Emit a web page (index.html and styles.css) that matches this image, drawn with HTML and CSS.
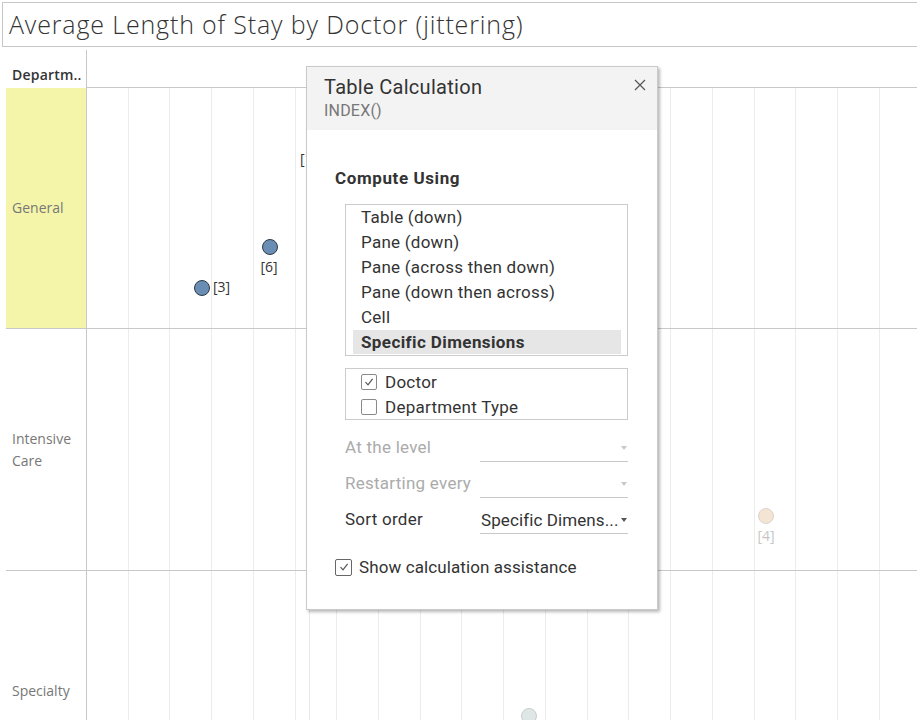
FILE: index.html
```html
<!DOCTYPE html>
<html>
<head>
<meta charset="utf-8">
<link rel="stylesheet" href="styles.css">
</head>
<body>
<div class="title">Average Length of Stay by Doctor (jittering)</div>
<div class="viz">
  <div class="hdr-label">Departm..</div>
  <div class="hdr-pane"></div>

  <div class="row-label sel"><span>General</span></div>
  <div class="pane">
    <div class="dot blue" style="left:107px;top:192px"></div>
    <div class="lbl" style="left:126px;top:190px">[3]</div>
    <div class="dot blue" style="left:175px;top:151px"></div>
    <div class="lbl center" style="left:182px;top:170px">[6]</div>
    <div class="lbl" style="left:213px;top:62px">[1]</div>
  </div>

  <div class="row-label"><span>Intensive<br>Care</span></div>
  <div class="pane">
    <div class="dot faded" style="left:671px;top:179px"></div>
    <div class="lbl center faint" style="left:679px;top:198px">[4]</div>
  </div>

  <div class="row-label low"><span>Specialty</span></div>
  <div class="pane last">
    <div class="dot teal" style="left:434px;top:137px"></div>
  </div>
</div>

<div class="dialog">
  <div class="dlg-head">
    <div class="dlg-title">Table Calculation</div>
    <div class="dlg-sub">INDEX()</div>
    <svg class="close" width="12" height="12" viewBox="0 0 12 12"><path d="M1 1L11 11M11 1L1 11" stroke="#555" stroke-width="1.2" fill="none"/></svg>
  </div>
  <div class="dlg-body">
    <div class="section">Compute Using</div>
    <div class="listbox">
      <div class="item">Table (down)</div>
      <div class="item">Pane (down)</div>
      <div class="item">Pane (across then down)</div>
      <div class="item">Pane (down then across)</div>
      <div class="item">Cell</div>
      <div class="item selected">Specific Dimensions</div>
    </div>
    <div class="checkbox-box">
      <div class="check-row"><span class="cb on"><svg width="10" height="10" viewBox="0 0 10 10"><path d="M1.5 5.2L4 7.8L8.6 1.8" stroke="#555" stroke-width="1.2" fill="none"/></svg></span>Doctor</div>
      <div class="check-row"><span class="cb"></span>Department Type</div>
    </div>
    <div class="field disabled">
      <div class="field-label">At the level</div>
      <div class="select"><span class="val"></span><span class="arrow"></span></div>
    </div>
    <div class="field disabled">
      <div class="field-label">Restarting every</div>
      <div class="select"><span class="val"></span><span class="arrow"></span></div>
    </div>
    <div class="field">
      <div class="field-label">Sort order</div>
      <div class="select"><span class="val">Specific Dimens...</span><span class="arrow"></span></div>
    </div>
    <div class="assist"><span class="cb big on"><svg width="10" height="10" viewBox="0 0 10 10"><path d="M1.5 5.2L4 7.8L8.6 1.8" stroke="#555" stroke-width="1.2" fill="none"/></svg></span>Show calculation assistance</div>
  </div>
</div>
</body>
</html>
```
FILE: styles.css
```css
html, body {
  margin: 0;
  padding: 0;
  background: #fff;
}
body {
  width: 917px;
  height: 720px;
  overflow: hidden;
  position: relative;
  font-family: "Open Sans", sans-serif;
}
.title {
  margin: 2px 0 0 2px;
  height: 43px;
  border: 1px solid #c6c6c6;
  border-right: none;
  padding-left: 6px;
  font-family: "Open Sans", sans-serif;
  font-size: 25px;
  font-weight: 300;
  line-height: 43px;
  color: #333;
  white-space: nowrap;
  letter-spacing: 0.85px;
}
.viz {
  margin-left: 6px;
  display: grid;
  grid-template-columns: 80px 831px;
  grid-template-rows: 40px 241px 242px 150px;
}
.hdr-label {
  font-size: 14px;
  font-weight: 600;
  color: #333;
  padding: 19px 0 0 6px;
  line-height: 18px;
  white-space: nowrap;
  letter-spacing: 0.2px;
}
.hdr-pane {
  margin-top: 3px;
  border-left: 1px solid #c8c8c8;
}
.row-label {
  border-top: 1px solid #c8c8c8;
  display: flex;
  align-items: center;
  padding-left: 6px;
  font-size: 14px;
  line-height: 22px;
  color: #777;
}
.row-label.sel {
  background: #f5f5aa;
  border-top-color: #fff;
}
.row-label.low {
  align-items: flex-start;
  padding-top: 109px;
  box-sizing: border-box;
}
.pane {
  position: relative;
  border-top: 1px solid #c8c8c8;
  border-left: 1px solid #c8c8c8;
  background-image:
    linear-gradient(90deg, transparent 222px, #e8e8e8 222px, #e8e8e8 223px, transparent 223px),
    repeating-linear-gradient(90deg, transparent 0, transparent 40.72px, #ececec 40.72px, #ececec 41.72px);
}
.dot {
  position: absolute;
  width: 14px;
  height: 14px;
  border-radius: 50%;
  border: 1px solid #333;
}
.dot.blue { background: #6a8db4; border-color: #2f3a46; }
.dot.faded { background: #f3e4d3; border-color: #dcd4cc; }
.dot.teal { background: #dfe7e6; border-color: #c8cfcf; }
.lbl {
  position: absolute;
  font-size: 14px;
  line-height: 18px;
  color: #333;
  white-space: nowrap;
}
.lbl.center { transform: translateX(-50%); }
.lbl.faint { color: #c6c6c6; }

.dialog {
  position: absolute;
  left: 306px;
  top: 66px;
  width: 350px;
  height: 542px;
  border: 1px solid #c9c9c9;
  background: #fff;
  box-shadow: 2px 2px 3px rgba(0,0,0,0.28);
  font-family: Roboto, "Liberation Sans", sans-serif;
  color: #333;
}
.dlg-head {
  position: relative;
  height: 55px;
  padding: 8px 0 0 17px;
  background: #f3f3f3;
}
.dlg-title {
  font-size: 20px;
  line-height: 24px;
  color: #333;
  letter-spacing: 0.3px;
}
.dlg-sub {
  margin-top: 2px;
  font-size: 16px;
  line-height: 20px;
  color: #777;
  letter-spacing: 0.2px;
}
.close {
  position: absolute;
  right: 11px;
  top: 12px;
}
.dlg-body {
  padding: 38px 29px 0 28px;
  letter-spacing: 0.25px;
}
.section {
  font-size: 17px;
  font-weight: 700;
  line-height: 20px;
  letter-spacing: 0.6px;
}
.listbox {
  margin: 16px 0 0 10px;
  border: 1px solid #ccc;
  padding: 0 6px 0 7px;
}
.item {
  height: 25px;
  line-height: 25px;
  padding-left: 8px;
  font-size: 17px;
  white-space: nowrap;
}
.item.selected {
  background: #e6e6e6;
  font-weight: 700;
  height: 24px;
  margin-bottom: 1px;
  letter-spacing: 0.4px;
}
.checkbox-box {
  margin: 12px 0 0 10px;
  border: 1px solid #ccc;
  padding-left: 15px;
}
.check-row {
  height: 25px;
  display: flex;
  align-items: center;
  font-size: 17px;
  line-height: 24px;
}
.cb {
  border: 1px solid #8a8a8a;
  border-radius: 2px;
  margin-right: 8px;
  display: flex;
  align-items: center;
  justify-content: center;
  box-sizing: border-box;
  width: 16px;
  height: 16px;
  flex: none;
}
.cb.big {
  width: 17px;
  height: 17px;
  margin-right: 7px;
  border-color: #666;
}
.field {
  display: flex;
  height: 28px;
  margin: 8px 0 0 10px;
  font-size: 17px;
}
.checkbox-box + .field { margin-top: 14px; }
.field-label {
  width: 135px;
  line-height: 27px;
  white-space: nowrap;
}
.field.disabled { color: #ababab; }
.select {
  flex: 1;
  display: flex;
  align-items: center;
  border-bottom: 1px solid #c8c8c8;
  padding-left: 1px;
  min-width: 0;
}
.val { flex: 1; white-space: nowrap; letter-spacing: 0.1px; }
.arrow {
  width: 0;
  height: 0;
  border-left: 3.5px solid transparent;
  border-right: 3.5px solid transparent;
  border-top: 4px solid #555;
  margin-right: 1px;
}
.field.disabled .arrow { border-top-color: #c8c8c8; }
.assist {
  margin-top: 24px;
  display: flex;
  align-items: center;
  font-size: 17px;
  height: 18px;
  letter-spacing: 0.1px;
}
```
